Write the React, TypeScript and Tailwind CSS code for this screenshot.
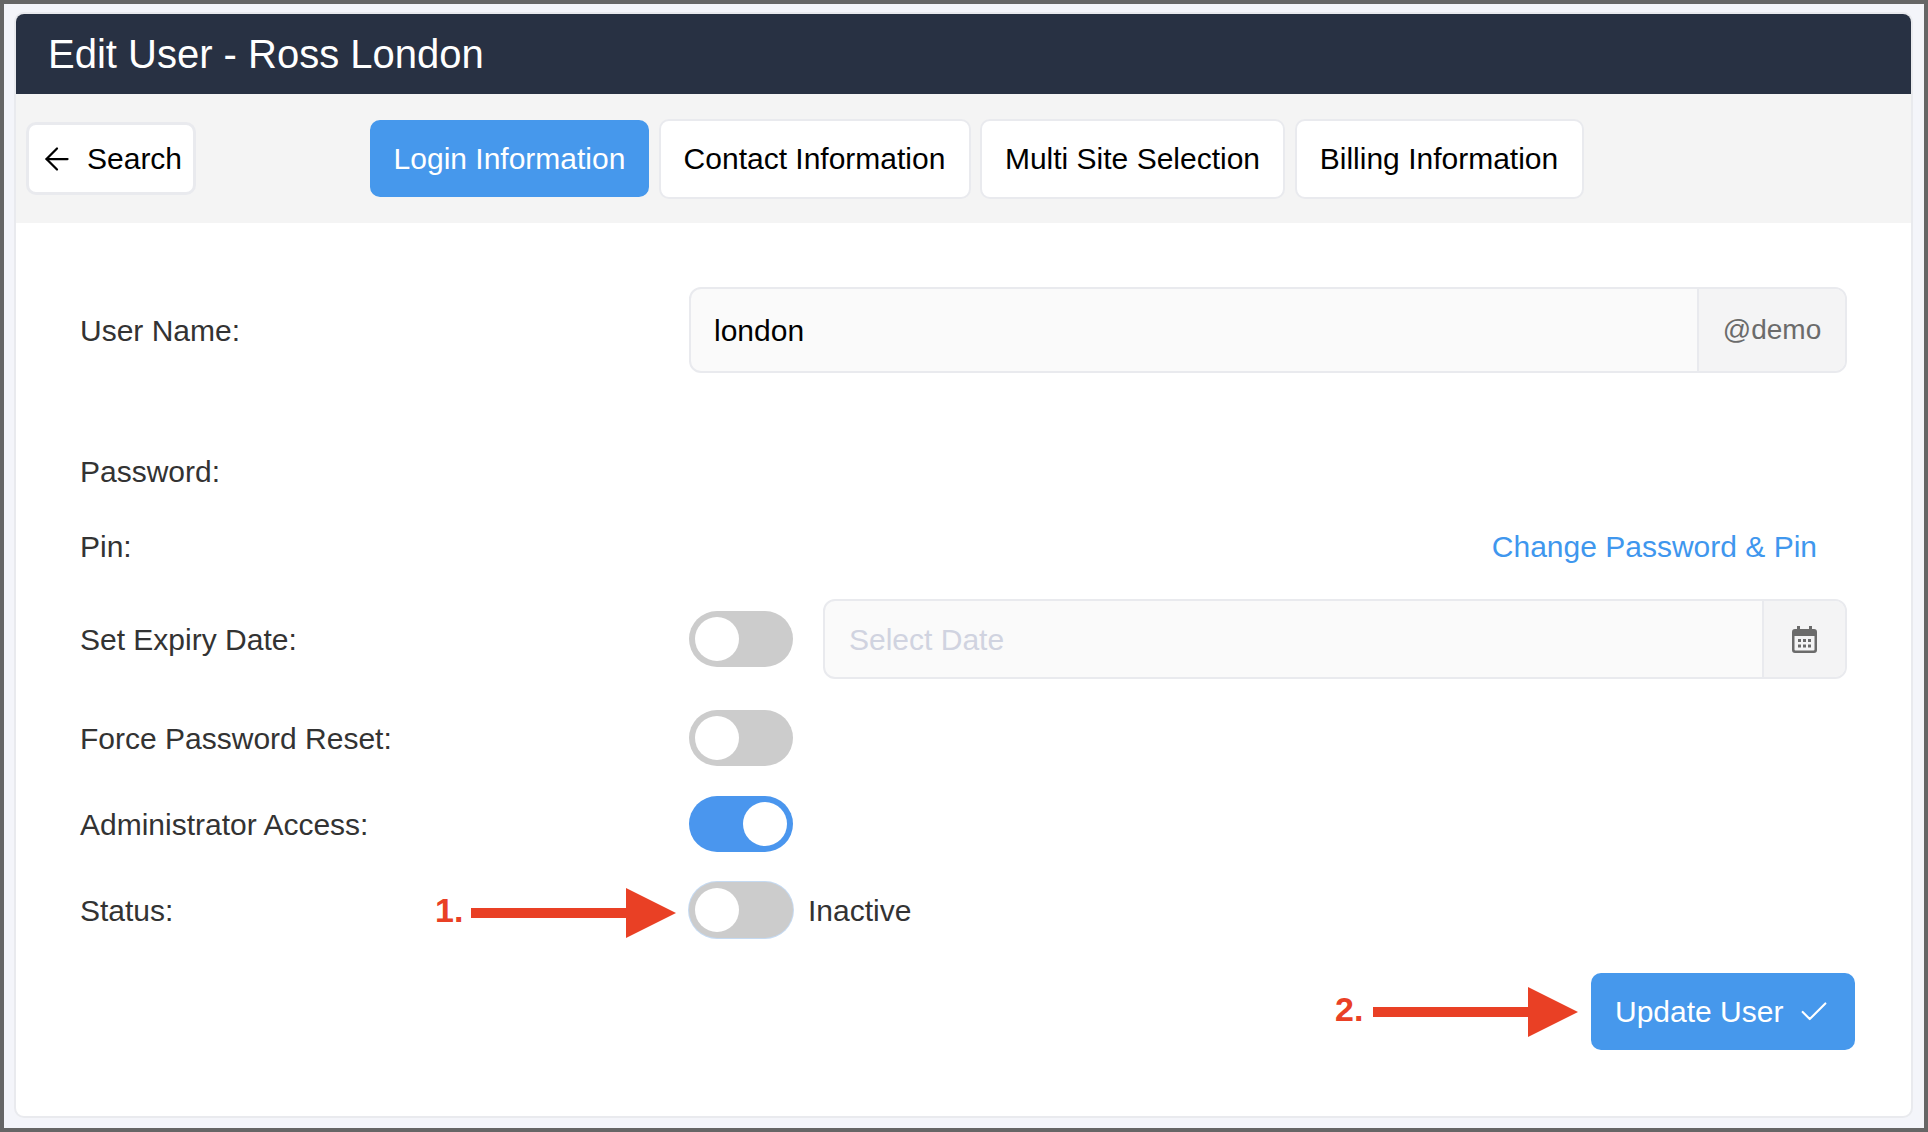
import { ArrowLeft, Check } from "lucide-react";

const tabs = [
  { label: "Login Information", className: "h-[77px] w-[279px] border-[#4698ec] bg-[#4698ec] text-white" },
  { label: "Contact Information", className: "h-[80px] w-[312px] border-[#e9eaee] bg-white text-black" },
  { label: "Multi Site Selection", className: "h-[80px] w-[305px] border-[#e9eaee] bg-white text-black" },
  { label: "Billing Information", className: "h-[80px] w-[289px] border-[#e9eaee] bg-white text-black" },
];

function Toggle({ on = false, focused = false }: { on?: boolean; focused?: boolean }) {
  return (
    <div
      className={`flex h-[56px] w-[104px] shrink-0 rounded-full p-[6px] ${on ? "justify-end bg-[#4a96ee]" : "justify-start bg-[#cccccc]"} ${focused ? "ring-1 ring-[#c5daf2]" : ""}`}
    >
      <div className="size-[44px] rounded-full bg-white" />
    </div>
  );
}

function Callout({ label, gap }: { label: string; gap: string }) {
  return (
    <div className={`flex items-center ${gap}`}>
      <span className="text-[34px] leading-none font-bold text-[#e94025]">{label}</span>
      <svg width="205" height="50" viewBox="0 0 205 50" className="mt-[6px]">
        <path d="M0 20H155V0L205 25L155 50V30H0Z" fill="#e94025" />
      </svg>
    </div>
  );
}

export default function App() {
  return (
    <div className="h-[1132px] w-[1928px] border-4 border-[#666666] bg-[#f4f5fa] pt-[8px] pr-[11px] pb-[10px] pl-[10px] font-['Liberation_Sans',Arial,sans-serif]">
      <div className="flex h-full flex-col overflow-hidden rounded-[10px] border-2 border-[#e9eaee] bg-white">
        {/* Header */}
        <div className="flex h-[80px] shrink-0 items-center bg-[#283143] pl-[32px] text-[40px] text-white">
          Edit User - Ross London
        </div>

        {/* Tabs */}
        <div className="flex h-[129px] shrink-0 items-center bg-[#f4f4f4] pl-[10px]">
          <button className="flex h-[73px] w-[170px] items-center gap-[12px] rounded-[10px] border-[3px] border-[#e9eaee] bg-white pl-[10px] text-[30px] text-black">
            <ArrowLeft size={36} strokeWidth={1.5} />
            Search
          </button>
          <div className="ml-[174px] flex items-center gap-[9.500px]">
            {tabs.map((t) => (
              <button key={t.label} className={`rounded-[10px] border-2 text-center text-[30px] ${t.className}`}>
                {t.label}
              </button>
            ))}
          </div>
        </div>

        {/* Form */}
        <div className="flex flex-col px-[64px] pt-[64px] text-[30px] text-[#333333]">
          <div className="flex h-[86px] items-center">
            <label className="w-[609px] shrink-0">User Name:</label>
            <div className="flex h-full flex-1 overflow-hidden rounded-[12px] border-2 border-[#e9eaee] bg-[#fafafa]">
              <div className="flex flex-1 items-center pl-[23px] text-black">london</div>
              <div className="flex w-[148px] items-center justify-center border-l-2 border-[#e9eaee] bg-[#f4f4f5] text-[28px] text-[#6b6b6b]">
                @demo
              </div>
            </div>
          </div>

          <div className="mt-[68px] flex h-[60px] items-center">
            <label>Password:</label>
          </div>

          <div className="mt-[15px] flex h-[60px] items-center justify-between pr-[30px]">
            <label>Pin:</label>
            <a className="text-[#3f97ee]">Change Password &amp; Pin</a>
          </div>

          <div className="mt-[23px] flex h-[80px] items-center">
            <label className="w-[609px] shrink-0">Set Expiry Date:</label>
            <Toggle />
            <div className="ml-[30px] flex h-full flex-1 overflow-hidden rounded-[12px] border-2 border-[#e9eaee] bg-[#fafafa]">
              <div className="flex flex-1 items-center pl-[24px] text-[#d0d3e0]">Select Date</div>
              <div className="flex w-[83px] items-center justify-center border-l-2 border-[#e9eaee] bg-[#f4f4f5]">
                <svg width="25" height="27" viewBox="0 0 25 27" fill="#6b6b6b">
                  <path
                    fillRule="evenodd"
                    d="M5 0h3v3h9V0h3v3h2a3 3 0 0 1 3 3v18a3 3 0 0 1-3 3H3a3 3 0 0 1-3-3V6a3 3 0 0 1 3-3h2ZM2.500 10v13.500a1 1 0 0 0 1 1h18a1 1 0 0 0 1-1V10Z"
                  />
                  <path d="M6 13h3v3H6zM11 13h3v3h-3zM16 13h3v3h-3zM6 18.500h3v3H6zM11 18.500h3v3h-3zM16 18.500h3v3h-3z" />
                </svg>
              </div>
            </div>
          </div>

          <div className="mt-[31px] flex items-center">
            <label className="w-[609px] shrink-0">Force Password Reset:</label>
            <Toggle />
          </div>

          <div className="mt-[30px] flex items-center">
            <label className="w-[609px] shrink-0">Administrator Access:</label>
            <Toggle on />
          </div>

          <div className="relative mt-[30px] flex items-center">
            <label className="w-[609px] shrink-0">Status:</label>
            <Toggle focused />
            <span className="ml-[15px]">Inactive</span>
            <div className="absolute top-[0px] left-[355px]">
              <Callout label="1." gap="gap-[8px]" />
            </div>
          </div>

          <div className="relative mt-[35px] flex justify-end">
            <button className="-mr-[8px] flex h-[77px] w-[264px] items-center rounded-[10px] bg-[#4698ec] pl-[24px] text-[30px] text-white">
              Update User
              <Check size={34} strokeWidth={1.5} className="ml-[14px]" />
            </button>
            <div className="absolute top-[8px] left-[1255px]">
              <Callout label="2." gap="gap-[10px]" />
            </div>
          </div>
        </div>
      </div>
    </div>
  );
}
